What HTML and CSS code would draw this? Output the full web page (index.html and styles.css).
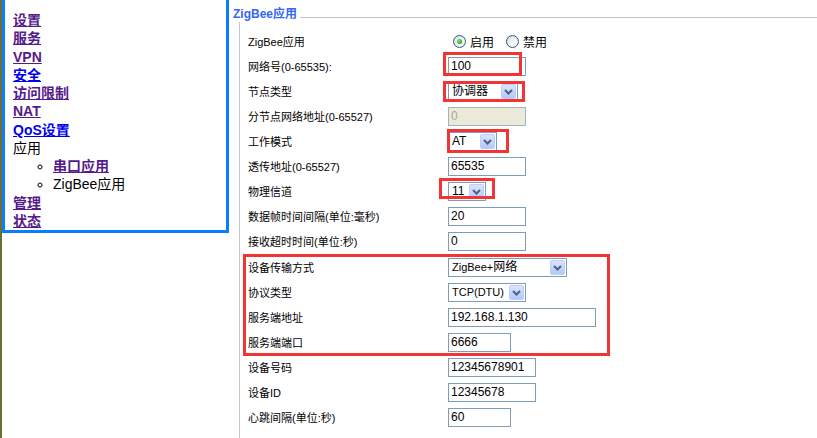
FILE: index.html
```html
<!DOCTYPE html>
<html lang="zh-CN">
<head>
<meta charset="utf-8">
<title>ZigBee应用</title>
<link rel="stylesheet" href="styles.css">
</head>
<body>
<div class="page">
  <div class="strip"></div>
  <nav class="menu">
    <ul class="menu-list">
      <li><a class="lnk visited" href="#">设置</a></li>
      <li><a class="lnk visited" href="#">服务</a></li>
      <li><a class="lnk visited" href="#">VPN</a></li>
      <li><a class="lnk fresh" href="#">安全</a></li>
      <li><a class="lnk visited" href="#">访问限制</a></li>
      <li><a class="lnk visited" href="#">NAT</a></li>
      <li><a class="lnk fresh" href="#">QoS设置</a></li>
      <li class="plain">应用
        <ul class="sub-list">
          <li><a class="lnk visited" href="#">串口应用</a></li>
          <li class="plain">ZigBee应用</li>
        </ul>
      </li>
      <li><a class="lnk visited" href="#">管理</a></li>
      <li><a class="lnk visited" href="#">状态</a></li>
    </ul>
  </nav>
  <main class="main">
    <div class="legend-row">
      <span class="legend">ZigBee应用</span>
      <span class="legend-line"></span>
    </div>
    <div class="panel">
      <div class="row">
        <span class="label">ZigBee应用</span>
        <div class="ctrl radios">
          <span class="radio checked"></span><span class="rtext">启用</span>
          <span class="radio"></span><span class="rtext">禁用</span>
        </div>
      </div>
      <div class="row">
        <span class="label">网络号(0-65535):</span>
        <div class="ctrl"><span class="input w78">100</span></div>
      </div>
      <div class="row">
        <span class="label">节点类型</span>
        <div class="ctrl"><span class="select w70"><span class="val">协调器</span><span class="arr"><svg width="9" height="6" viewBox="0 0 9 6"><polyline points="1,1 4.5,4.5 8,1" fill="none" stroke="#4d6185" stroke-width="2"/></svg></span></span></div>
      </div>
      <div class="row">
        <span class="label">分节点网络地址(0-65527)</span>
        <div class="ctrl"><span class="input w78 disabled">0</span></div>
      </div>
      <div class="row">
        <span class="label">工作模式</span>
        <div class="ctrl"><span class="select w49"><span class="val">AT</span><span class="arr"><svg width="9" height="6" viewBox="0 0 9 6"><polyline points="1,1 4.5,4.5 8,1" fill="none" stroke="#4d6185" stroke-width="2"/></svg></span></span></div>
      </div>
      <div class="row">
        <span class="label">透传地址(0-65527)</span>
        <div class="ctrl"><span class="input w78">65535</span></div>
      </div>
      <div class="row">
        <span class="label">物理信道</span>
        <div class="ctrl"><span class="select w38"><span class="val">11</span><span class="arr"><svg width="9" height="6" viewBox="0 0 9 6"><polyline points="1,1 4.5,4.5 8,1" fill="none" stroke="#4d6185" stroke-width="2"/></svg></span></span></div>
      </div>
      <div class="row">
        <span class="label">数据帧时间间隔(单位:毫秒)</span>
        <div class="ctrl"><span class="input w78">20</span></div>
      </div>
      <div class="row">
        <span class="label">接收超时时间(单位:秒)</span>
        <div class="ctrl"><span class="input w78">0</span></div>
      </div>
      <div class="row row-gap">
        <span class="label">设备传输方式</span>
        <div class="ctrl"><span class="select w119"><span class="val tight">ZigBee+<span class="cjk">网络</span></span><span class="arr"><svg width="9" height="6" viewBox="0 0 9 6"><polyline points="1,1 4.5,4.5 8,1" fill="none" stroke="#4d6185" stroke-width="2"/></svg></span></span></div>
      </div>
      <div class="row">
        <span class="label">协议类型</span>
        <div class="ctrl"><span class="select w78"><span class="val tight">TCP(DTU)</span><span class="arr"><svg width="9" height="6" viewBox="0 0 9 6"><polyline points="1,1 4.5,4.5 8,1" fill="none" stroke="#4d6185" stroke-width="2"/></svg></span></span></div>
      </div>
      <div class="row">
        <span class="label">服务端地址</span>
        <div class="ctrl"><span class="input w148">192.168.1.130</span></div>
      </div>
      <div class="row">
        <span class="label">服务端端口</span>
        <div class="ctrl"><span class="input w63">6666</span></div>
      </div>
      <div class="row">
        <span class="label">设备号码</span>
        <div class="ctrl"><span class="input w88">12345678901</span></div>
      </div>
      <div class="row">
        <span class="label">设备ID</span>
        <div class="ctrl"><span class="input w88">12345678</span></div>
      </div>
      <div class="row">
        <span class="label">心跳间隔(单位:秒)</span>
        <div class="ctrl"><span class="input w63">60</span></div>
      </div>
    </div>
  </main>
  <div class="mark mark-1"></div>
  <div class="mark mark-2"></div>
  <div class="mark mark-3"></div>
  <div class="mark mark-4"></div>
  <div class="mark mark-5"></div>
</div>
</body>
</html>
```
FILE: styles.css
```css
html, body {
  margin: 0;
  padding: 0;
  background: #ffffff;
}
.page {
  position: relative;
  display: flex;
  width: 817px;
  height: 438px;
  overflow: hidden;
  font-family: "Liberation Sans", "Noto Sans CJK SC", sans-serif;
}
.strip {
  width: 2px;
  flex: none;
  background: #6f6e32;
}
.menu {
  flex: none;
  width: 227px;
  height: 233px;
  box-sizing: border-box;
  border: 3px solid #0a7cff;
  border-top: 0;
  overflow: hidden;
}
.menu-list {
  margin: 0;
  padding: 11px 0 0 8px;
  list-style: disc outside;
  font-size: 14px;
  line-height: 18.27px;
}
.menu-list li { color: #aab4c0; }
.menu-list .plain { color: #000; }
.lnk {
  font-weight: bold;
  text-decoration: underline;
}
.visited { color: #551a8b; }
.fresh { color: #0000ee; }
.sub-list {
  margin: 0;
  padding-left: 40px;
  list-style: circle outside;
}
.sub-list li { color: #000; }

.main {
  flex: 1;
  display: flex;
  flex-direction: column;
  height: 438px;
}
.legend-row {
  display: flex;
  height: 22px;
  flex: none;
}
.legend {
  margin-left: 4px;
  padding-top: 8px;
  font-size: 12px;
  line-height: 12px;
  font-weight: bold;
  color: #3567f0;
  white-space: nowrap;
}
.legend-line {
  flex: 1;
  height: 17px;
  margin-left: 3px;
  border-bottom: 1px solid #c4c4c4;
}
.panel {
  flex: 1;
  margin-left: 10px;
  border-left: 1px solid #c8c8c8;
  padding: 7px 0 0 8px;
}
.row {
  display: flex;
  align-items: center;
  height: 25px;
}
.row-gap { margin-top: 1px; }
.label {
  width: 200px;
  flex: none;
  font-size: 11px;
  line-height: 14px;
  color: #000;
  white-space: nowrap;
}
.ctrl {
  display: flex;
  align-items: center;
}
.input {
  display: block;
  box-sizing: border-box;
  height: 19px;
  border: 1px solid #7f9db9;
  background: #fff;
  padding-left: 2px;
  font-size: 12px;
  line-height: 17px;
  color: #000;
  white-space: nowrap;
}
.input.disabled {
  background: #ebe9d8;
  color: #aca899;
  border-color: #a3b3c3;
}
.w38 { width: 38px; }
.w49 { width: 49px; }
.w63 { width: 63px; }
.w70 { width: 70px; }
.w78 { width: 78px; }
.w88 { width: 88px; }
.w119 { width: 119px; }
.w148 { width: 148px; }
.select {
  display: flex;
  align-items: center;
  box-sizing: border-box;
  height: 19px;
  border: 1px solid #7f9db9;
  background: #fff;
}
.select .val {
  flex: 1;
  padding-left: 3px;
  font-size: 12px;
  line-height: 17px;
  white-space: nowrap;
  overflow: hidden;
}
.select .val.tight {
  font-size: 11px;
  padding-left: 3px;
}
.cjk { font-size: 12px; }
.select .arr {
  flex: none;
  display: flex;
  align-items: center;
  justify-content: center;
  box-sizing: border-box;
  width: 15px;
  height: 15px;
  margin-right: 1px;
  border: 1px solid #bccefa;
  border-radius: 2px;
  background: linear-gradient(#dae5fe, #b3c8f7);
}
.radios {
  font-size: 12px;
}
.radio {
  box-sizing: border-box;
  width: 13px;
  height: 13px;
  margin-left: 5px;
  border: 1px solid #2a5a8a;
  border-radius: 50%;
  background: radial-gradient(circle at 65% 65%, #ffffff 0, #f2f2ee 40%, #d4d4cc 100%);
  display: flex;
  align-items: center;
  justify-content: center;
}
.radio.checked::after {
  content: "";
  width: 5px;
  height: 5px;
  border-radius: 50%;
  background: radial-gradient(circle at 40% 40%, #8ae68a 0, #21a121 70%);
}
.rtext {
  margin-left: 4px;
  margin-right: 7px;
}

.mark {
  position: absolute;
  box-sizing: border-box;
  border: 3px solid #f23434;
}
.mark-1 { left: 443px; top: 52px; width: 79px; height: 24px; }
.mark-2 { left: 443px; top: 81px; width: 82px; height: 21px; }
.mark-3 { left: 447px; top: 129px; width: 62px; height: 24px; }
.mark-4 { left: 439px; top: 178px; width: 56px; height: 21px; }
.mark-5 { left: 243px; top: 254px; width: 367px; height: 102px; }
```
